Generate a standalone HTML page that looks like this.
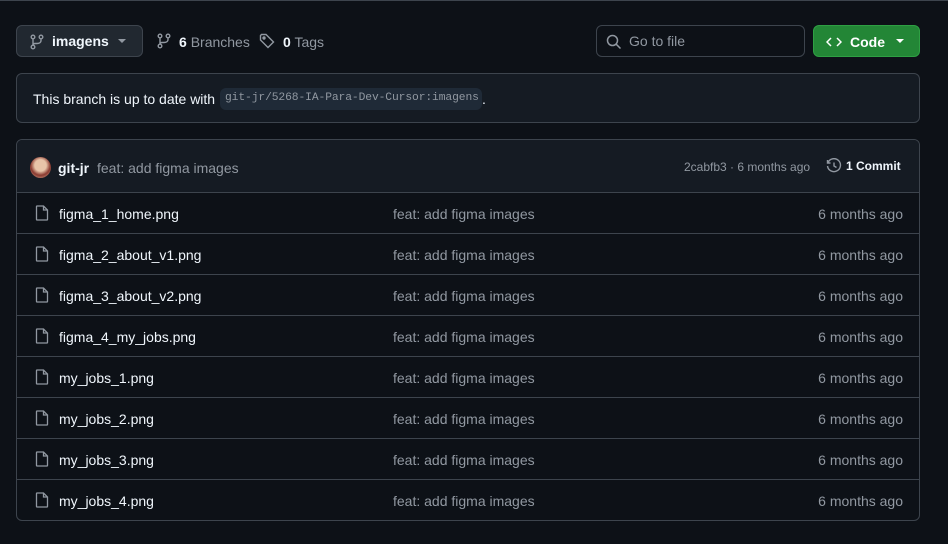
<!DOCTYPE html>
<html><head><style>
*{box-sizing:border-box;margin:0;padding:0}
body{width:948px;height:544px;background:#0d1117;font-family:"Liberation Sans",sans-serif;color:#f0f6fc;position:relative;overflow:hidden}
.abs{position:absolute}
.btn{left:16px;top:25px;width:127px;height:32px;border:1px solid #3d444d;border-radius:6px;background:#212830}
.muted{color:#9198a1}
svg{display:block}
.box{border:1px solid #3d444d;border-radius:6px}
.row{position:absolute;left:0;right:0;height:41px;border-top:1px solid #3d444d;font-size:14px}
.row .ic{position:absolute;left:18px;top:12px}
.row .n{position:absolute;left:42px;top:13px;color:#f0f6fc}
.row .m{position:absolute;left:376px;top:13px;color:#9198a1}
.row .t{position:absolute;right:16px;top:13px;color:#9198a1}
</style></head><body>
<div class="abs" style="left:0;top:0;width:948px;height:1px;background:#3d444d"></div>
<div class="abs btn">
<svg class="abs" style="left:13px;top:8px" width="14" height="16" viewBox="0 0 14 16" fill="none" stroke="#9198a1" stroke-width="1.4"><circle cx="3" cy="13" r="1.8"/><circle cx="3" cy="3" r="1.8"/><circle cx="11" cy="3" r="1.8"/><path d="M3 5v6M11 5v1.5c0 2-2 3-4 3H5c-1.2 0-2 .7-2 1.6"/></svg>
<span class="abs" style="left:35px;top:7px;font-weight:bold;font-size:14px">imagens</span>
<svg class="abs" style="left:101px;top:13px" width="8" height="5"><path d="M0 0h8L4 4z" fill="#9198a1"/></svg>
</div>
<svg class="abs" style="left:157px;top:33px" width="14" height="16" viewBox="0 0 14 16" fill="none" stroke="#9198a1" stroke-width="1.4"><circle cx="3" cy="13" r="1.8"/><circle cx="3" cy="3" r="1.8"/><circle cx="11" cy="3" r="1.8"/><path d="M3 5v6M11 5v1.5c0 2-2 3-4 3H5c-1.2 0-2 .7-2 1.6"/></svg>
<span class="abs" style="left:179px;top:34px;font-size:14px"><b>6</b> <span class="muted">Branches</span></span>
<svg class="abs" style="left:259px;top:33px" width="16" height="16" viewBox="0 0 16 16" fill="none" stroke="#9198a1" stroke-width="1.4"><path d="M1.5 2.5v4.5l7.5 7.5 5.5-5.5-7.5-7.5H2.5z"/><circle cx="5" cy="5" r="1" fill="#9198a1"/></svg>
<span class="abs" style="left:283px;top:34px;font-size:14px"><b>0</b> <span class="muted">Tags</span></span>
<div class="abs" style="left:596px;top:25px;width:209px;height:32px;border:1px solid #3d444d;border-radius:6px;background:#0d1117">
<svg class="abs" style="left:9px;top:8px" width="16" height="16" viewBox="0 0 16 16" fill="none" stroke="#9198a1" stroke-width="1.5"><circle cx="6.5" cy="6.5" r="5"/><path d="M10.3 10.3l4.2 4.2"/></svg>
<span class="abs muted" style="left:32px;top:7px;font-size:14px">Go to file</span></div>
<div class="abs" style="left:813px;top:25px;width:107px;height:32px;border-radius:6px;background:#238636;border:1px solid #2ea043">
<svg class="abs" style="left:12px;top:8px" width="16" height="16" viewBox="0 0 16 16" fill="none" stroke="#fff" stroke-width="1.5"><path d="M5 4L1 8l4 4M11 4l4 4-4 4"/></svg>
<span class="abs" style="left:36px;top:8px;font-weight:bold;font-size:14px;color:#fff">Code</span>
<svg class="abs" style="left:82px;top:13px" width="8" height="5"><path d="M0 0h8L4 4z" fill="#fff"/></svg></div>
<div class="abs box" style="left:16px;top:73px;width:904px;height:50px;background:#151b23">
<span class="abs" style="left:16px;top:17px;font-size:14px">This branch is up to date with</span>
<span class="abs" style="left:203px;top:14px;height:22px;width:262px;padding:4px 5px;background:#1f2a37;border-radius:6px;font-family:'Liberation Mono',monospace;font-size:11.3px;color:#9198a1;white-space:nowrap;letter-spacing:-0.1px">git-jr/5268-IA-Para-Dev-Cursor:imagens</span>
<span class="abs" style="left:465px;top:17px;font-size:14px">.</span></div>
<div class="abs box" style="left:16px;top:139px;width:904px;height:382px;overflow:hidden">
<div class="abs" style="left:0;top:0;right:0;height:53px;background:#151b23">
<div class="abs" style="left:13px;top:17px;width:21px;height:21px;border-radius:50%;background:radial-gradient(circle at 50% 40%,#e8c4a8 0 35%,#8a3a30 60%,#d9b49a 100%)"></div>
<span class="abs" style="left:41px;top:20px;font-weight:bold;font-size:14px">git-jr</span>
<span class="abs muted" style="left:80px;top:20px;font-size:14px">feat: add figma images</span>
<span class="abs muted" style="left:667px;top:20px;font-size:12px">2cabfb3 · 6 months ago</span>
<svg class="abs" style="left:809px;top:18px" width="16" height="16" viewBox="0 0 16 16" fill="none" stroke="#9198a1" stroke-width="1.4"><path d="M2 4.5A6.5 6.5 0 1 1 1.5 8M1.5 2v3h3M8 4.5V8l2.5 1.5"/></svg>
<span class="abs" style="left:829px;top:19px;font-weight:bold;font-size:12px">1 Commit</span></div>
<div class="row" style="top:52px"><svg class="ic" width="14" height="16" viewBox="0 0 14 16" fill="none" stroke="#9198a1" stroke-width="1.3"><path d="M2 1h6.5L12.5 5v9.5a.5.5 0 0 1-.5.5H2a.5.5 0 0 1-.5-.5V1.5A.5.5 0 0 1 2 1zM8.5 1v4h4"/></svg><span class="n">figma_1_home.png</span><span class="m">feat: add figma images</span><span class="t">6 months ago</span></div>
<div class="row" style="top:93px"><svg class="ic" width="14" height="16" viewBox="0 0 14 16" fill="none" stroke="#9198a1" stroke-width="1.3"><path d="M2 1h6.5L12.5 5v9.5a.5.5 0 0 1-.5.5H2a.5.5 0 0 1-.5-.5V1.5A.5.5 0 0 1 2 1zM8.5 1v4h4"/></svg><span class="n">figma_2_about_v1.png</span><span class="m">feat: add figma images</span><span class="t">6 months ago</span></div>
<div class="row" style="top:134px"><svg class="ic" width="14" height="16" viewBox="0 0 14 16" fill="none" stroke="#9198a1" stroke-width="1.3"><path d="M2 1h6.5L12.5 5v9.5a.5.5 0 0 1-.5.5H2a.5.5 0 0 1-.5-.5V1.5A.5.5 0 0 1 2 1zM8.5 1v4h4"/></svg><span class="n">figma_3_about_v2.png</span><span class="m">feat: add figma images</span><span class="t">6 months ago</span></div>
<div class="row" style="top:175px"><svg class="ic" width="14" height="16" viewBox="0 0 14 16" fill="none" stroke="#9198a1" stroke-width="1.3"><path d="M2 1h6.5L12.5 5v9.5a.5.5 0 0 1-.5.5H2a.5.5 0 0 1-.5-.5V1.5A.5.5 0 0 1 2 1zM8.5 1v4h4"/></svg><span class="n">figma_4_my_jobs.png</span><span class="m">feat: add figma images</span><span class="t">6 months ago</span></div>
<div class="row" style="top:216px"><svg class="ic" width="14" height="16" viewBox="0 0 14 16" fill="none" stroke="#9198a1" stroke-width="1.3"><path d="M2 1h6.5L12.5 5v9.5a.5.5 0 0 1-.5.5H2a.5.5 0 0 1-.5-.5V1.5A.5.5 0 0 1 2 1zM8.5 1v4h4"/></svg><span class="n">my_jobs_1.png</span><span class="m">feat: add figma images</span><span class="t">6 months ago</span></div>
<div class="row" style="top:257px"><svg class="ic" width="14" height="16" viewBox="0 0 14 16" fill="none" stroke="#9198a1" stroke-width="1.3"><path d="M2 1h6.5L12.5 5v9.5a.5.5 0 0 1-.5.5H2a.5.5 0 0 1-.5-.5V1.5A.5.5 0 0 1 2 1zM8.5 1v4h4"/></svg><span class="n">my_jobs_2.png</span><span class="m">feat: add figma images</span><span class="t">6 months ago</span></div>
<div class="row" style="top:298px"><svg class="ic" width="14" height="16" viewBox="0 0 14 16" fill="none" stroke="#9198a1" stroke-width="1.3"><path d="M2 1h6.5L12.5 5v9.5a.5.5 0 0 1-.5.5H2a.5.5 0 0 1-.5-.5V1.5A.5.5 0 0 1 2 1zM8.5 1v4h4"/></svg><span class="n">my_jobs_3.png</span><span class="m">feat: add figma images</span><span class="t">6 months ago</span></div>
<div class="row" style="top:339px"><svg class="ic" width="14" height="16" viewBox="0 0 14 16" fill="none" stroke="#9198a1" stroke-width="1.3"><path d="M2 1h6.5L12.5 5v9.5a.5.5 0 0 1-.5.5H2a.5.5 0 0 1-.5-.5V1.5A.5.5 0 0 1 2 1zM8.5 1v4h4"/></svg><span class="n">my_jobs_4.png</span><span class="m">feat: add figma images</span><span class="t">6 months ago</span></div>
</div>
</body></html>
